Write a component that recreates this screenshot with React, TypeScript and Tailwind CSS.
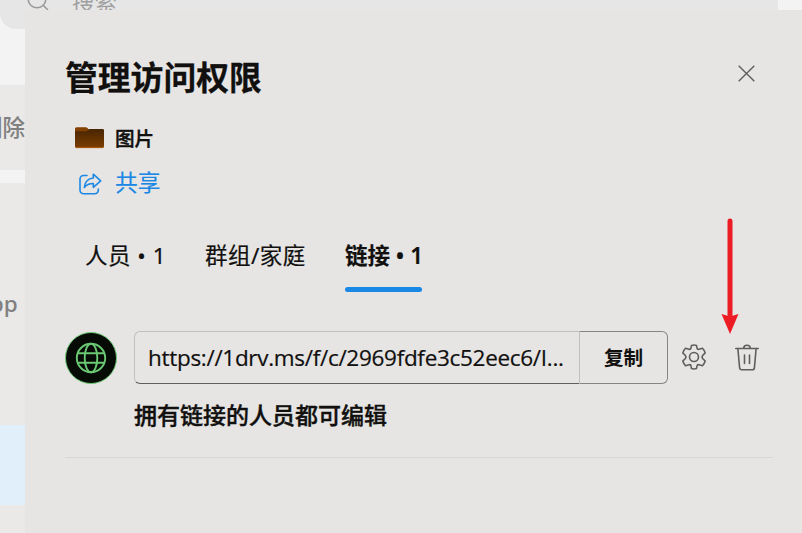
import type { ReactNode } from "react";

interface Tab {
  id: string;
  label: string;
  className: string;
}

const tabs: Tab[] = [
  { id: "people", label: "人员 • 1", className: "ml-[20px] w-[80px] tracking-[0.5px]" },
  { id: "groups", label: "群组/家庭", className: "ml-[40px] w-[101px] tracking-[0.5px]" },
  { id: "links", label: "链接 • 1", className: "ml-[39px] w-[77px] font-semibold" },
];

function SearchIcon() {
  return (
    <svg className="h-[24px] w-[24px]" viewBox="0 0 24 24" fill="none" stroke="#9a9a9a" strokeWidth="1.6" strokeLinecap="round">
      <circle cx="10" cy="11" r="8.8" />
      <path d="M16.1 17.2 20.5 21.5" />
    </svg>
  );
}

function FolderIcon() {
  return (
    <svg className="h-[22px] w-[30px]" viewBox="0 0 30 22">
      <defs>
        <linearGradient id="folder" x1="0" y1="0" x2="0" y2="1">
          <stop offset="0" stopColor="#482500" />
          <stop offset="1" stopColor="#7b3d00" />
        </linearGradient>
      </defs>
      <path d="M0 1.7Q0 .2 1.5.2h9.3q1 0 1.6.8L14 2.7V7H0z" fill="#844000" />
      <path d="M0 4.2h10.5q1 0 1.8-.8l.9-.7q.7-.6 1.6-.6h12.7q1.5 0 1.500 1.2v16q0 1.600-1.500 1.600H1.500Q0 20.900 0 19.300z" fill="url(#folder)" />
      <path d="M.3 20.100q.4.600 1.200.600h26q.800 0 1.200-.6" fill="none" stroke="#c46a13" strokeWidth=".8" />
    </svg>
  );
}

function ShareIcon() {
  return (
    <svg className="mt-[2px] h-[22px] w-[23px]" viewBox="0 0 23 22" fill="none" stroke="#1c88e5" strokeWidth="1.6" strokeLinecap="round" strokeLinejoin="round">
      <path d="M8 2.500H4.500A3.500 3.500 0 0 0 1 6v11.300a3.500 3.500 0 0 0 3.500 3.500h11.300a3.500 3.500 0 0 0 3.500-3.500V16" />
      <path d="M14.300 1.200 21.700 7.800 14.300 14.300v-3.800c-4-.1-6.700 1-9 4C5.800 9 8.700 5.600 14.300 5z" />
    </svg>
  );
}

function CloseIcon() {
  return (
    <svg className="h-[17px] w-[17px]" viewBox="0 0 17 17" fill="none" stroke="#605e5c" strokeWidth="1.4">
      <path d="m.7.7 15.6 15.6M16.3.7.7 16.3" />
    </svg>
  );
}

function GlobeIcon() {
  return (
    <svg className="h-[32px] w-[32px]" viewBox="0 0 32 32" fill="none" stroke="#6bc873" strokeWidth="1.9">
      <circle cx="16" cy="16" r="14.2" />
      <ellipse cx="16" cy="16" rx="6.3" ry="14.2" />
      <path d="M2.7 11.3h26.6M2.7 20.7h26.6" />
    </svg>
  );
}

function GearIcon() {
  return (
    <svg className="h-[26px] w-[26px]" viewBox="0 0 26 26" fill="none" stroke="#605e5c" strokeWidth="1.6" strokeLinejoin="round">
      <path d="M10.500 1.400Q13 .7 15.500 1.400L16.100 4.300Q16.500 5.700 17.900 5.300L21.500 4.300Q23.400 6.300 24.200 9L21.900 11.200Q20.300 13 21.900 14.800L24.200 17Q23.400 19.700 21.500 21.700L17.900 20.700Q16.500 20.300 16.100 21.700L15.500 24.600Q13 25.300 10.500 24.600L9.900 21.700Q9.500 20.300 8.100 20.700L4.500 21.700Q2.600 19.700 1.800 17L4.100 14.800Q5.700 13 4.100 11.200L1.800 9Q2.600 6.300 4.500 4.300L8.100 5.300Q9.500 5.700 9.900 4.300Z" />
      <circle cx="13" cy="13" r="4.5" />
    </svg>
  );
}

function TrashIcon() {
  return (
    <svg className="h-[27px] w-[24px]" viewBox="0 0 24 27" fill="none" stroke="#605e5c" strokeWidth="1.6" strokeLinecap="round" strokeLinejoin="round">
      <path d="M.8 4.5h22.4M8.7 4.2a3.3 3 0 0 1 6.6 0M2.9 4.7 4.6 23.8q.2 2 2.200 2h10.400q2 0 2.200-2L21.100 4.700M9.500 11v8.500M14.500 11v8.500" />
    </svg>
  );
}

function RedArrow() {
  return (
    <svg className="absolute left-[696px] top-[208px] h-[117px] w-[18px]" viewBox="0 0 18 117">
      <path d="M9 3v98" stroke="#ed1c24" strokeWidth="5" strokeLinecap="round" />
      <path d="m.5 96 8.500 2.500 8.500-2.500L9 116z" fill="#ed1c24" />
    </svg>
  );
}

function IconButton({ label, className, children }: { label: string; className: string; children: ReactNode }) {
  return (
    <button aria-label={label} className={className}>
      {children}
    </button>
  );
}

function Backdrop() {
  return (
    <div className="flex h-full flex-col bg-[#f3f3f3] text-[22.5px] text-[#808080]">
      <div className="flex h-[29px] w-[778px] shrink-0 items-start overflow-hidden rounded-bl-[16px] bg-[#e6e6e6] pl-[27px]">
        <div className="-mt-[12px] shrink-0">
          <SearchIcon />
        </div>
        <span className="-mt-[13px] ml-[21px] leading-[32px] text-[#a0a0a0]">搜索</span>
      </div>
      <div className="mt-[56px] flex h-[85px] shrink-0 items-center bg-[#eae9e7]">
        <span className="-ml-[20px] font-medium">删除</span>
      </div>
      <div className="mt-[13px] flex flex-1 flex-col bg-[#eae9e7]">
        <div className="flex h-[242px] items-center">
          <span className="-ml-[25px] font-medium">App</span>
        </div>
        <div className="h-[80px] bg-[#e1effb]" />
      </div>
    </div>
  );
}

export default function App() {
  return (
    <div className="relative h-[533px] w-[802px] overflow-hidden font-['Noto_Sans','Noto_Sans_CJK_SC',sans-serif] text-[#11100f]">
      <Backdrop />

      <section className="absolute left-[25px] top-[10px] h-[523px] w-[777px] rounded-tl-[6px] bg-[#e6e5e3] pl-[40px] pr-[29px]">
        <header className="flex h-[104px] items-center justify-between pr-[18px] pt-[29px]">
          <h1 className="-mt-[2px] font-['Noto_Sans_CJK_SC',sans-serif] text-[32.8px] font-bold leading-[48px] [-webkit-text-stroke:0.3px]">管理访问权限</h1>
          <IconButton label="关闭" className="-mt-[6px]">
            <CloseIcon />
          </IconButton>
        </header>

        <div className="flex h-[48px] items-center pl-[10px]">
          <FolderIcon />
          <span className="mt-[2px] ml-[10px] text-[19.6px] font-medium leading-[30px] [-webkit-text-stroke:0.4px]">图片</span>
        </div>
        <button className="flex h-[41px] items-center pl-[14px] text-[#1c88e5]">
          <ShareIcon />
          <span className="ml-[13px] text-[22.7px] leading-[32px] [-webkit-text-stroke:0.2px]">共享</span>
        </button>

        <nav className="mt-[22px] flex h-[67px] text-[22.5px] [-webkit-text-stroke:0.2px]">
          {tabs.map((tab) => (
            <button key={tab.id} className={`flex flex-col text-left whitespace-nowrap ${tab.className}`}>
              <span className="h-[62px] leading-[62px]">{tab.label}</span>
              {tab.id === "links" && <span className="h-[5px] w-full rounded-full bg-[#1a88e5]" />}
            </button>
          ))}
        </nav>

        <div className="mt-[39px] flex h-[53px] items-center">
          <div className="flex h-[52px] w-[52px] items-center justify-center rounded-full border border-[#6bc873] bg-[#060b06]">
            <GlobeIcon />
          </div>
          <div className="ml-[17px] flex h-[53px] w-[445px] items-center rounded-l-[6px] border border-r-0 border-[#c1bfbd] border-b-[#605e5c] pl-[13px]">
            <span className="whitespace-nowrap font-['Open_Sans',sans-serif] text-[22.5px] leading-[32px] tracking-[-0.3px] [-webkit-text-stroke:0.2px]">https://1drv.ms/f/c/2969fdfe3c52eec6/I...</span>
          </div>
          <button className="h-[53px] w-[89px] rounded-r-[6px] border border-[#878583] border-l-[#c1bfbd] text-[19.6px] font-bold">复制</button>
          <IconButton label="设置" className="-mt-[2px] ml-[13px]">
            <GearIcon />
          </IconButton>
          <IconButton label="删除链接" className="-mt-[1px] ml-[28px]">
            <TrashIcon />
          </IconButton>
        </div>

        <p className="h-[74px] border-b border-[#d8d7d5] pl-[69px] text-[23px] font-medium leading-[62px] [-webkit-text-stroke:0.4px]">拥有链接的人员都可编辑</p>

        <RedArrow />
      </section>
    </div>
  );
}
